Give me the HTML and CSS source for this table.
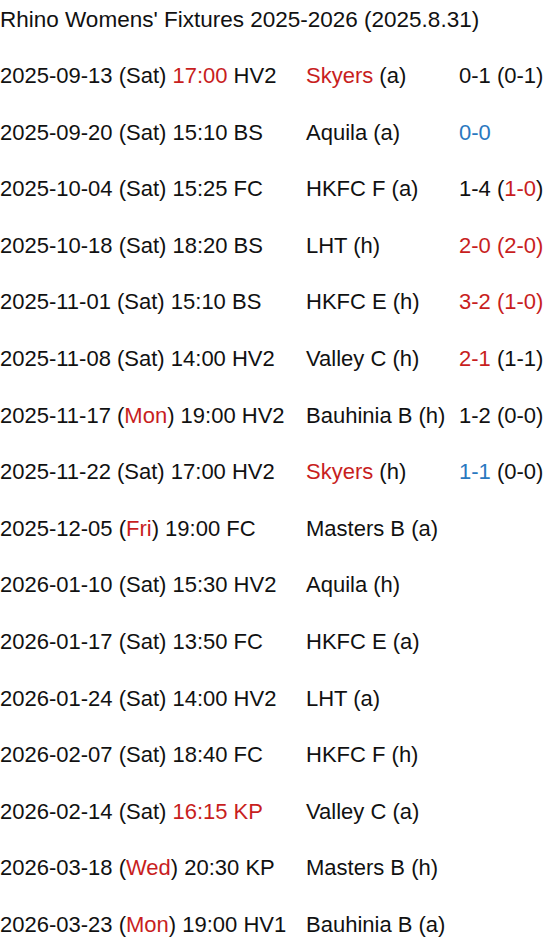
FILE: index.html
```html
<!DOCTYPE html>
<html lang="en">
<head>
<meta charset="utf-8">
<title>Rhino Womens' Fixtures 2025-2026</title>
<link rel="stylesheet" href="styles.css">
</head>
<body>
<div class="page">
  <div class="title">Rhino Womens' Fixtures 2025-2026 (2025.8.31)</div>
  <div class="fixtures">
    <div class="c1">2025-09-13 (Sat) <span class="red">17:00</span> HV2</div><div class="c2"><span class="red">Skyers</span> (a)</div><div class="c3">0-1 (0-1)</div>
    <div class="c1">2025-09-20 (Sat) 15:10 BS</div><div class="c2">Aquila (a)</div><div class="c3"><span class="blue">0-0</span></div>
    <div class="c1">2025-10-04 (Sat) 15:25 FC</div><div class="c2">HKFC F (a)</div><div class="c3">1-4 (<span class="red">1-0</span>)</div>
    <div class="c1">2025-10-18 (Sat) 18:20 BS</div><div class="c2">LHT (h)</div><div class="c3"><span class="red">2-0 (2-0)</span></div>
    <div class="c1">2025-11-01 (Sat) 15:10 BS</div><div class="c2">HKFC E (h)</div><div class="c3"><span class="red">3-2 (1-0)</span></div>
    <div class="c1">2025-11-08 (Sat) 14:00 HV2</div><div class="c2">Valley C (h)</div><div class="c3"><span class="red">2-1</span> (1-1)</div>
    <div class="c1">2025-11-17 (<span class="red">Mon</span>) 19:00 HV2</div><div class="c2">Bauhinia B (h)</div><div class="c3">1-2 (0-0)</div>
    <div class="c1">2025-11-22 (Sat) 17:00 HV2</div><div class="c2"><span class="red">Skyers</span> (h)</div><div class="c3"><span class="blue">1-1</span> (0-0)</div>
    <div class="c1">2025-12-05 (<span class="red">Fri</span>) 19:00 FC</div><div class="c2">Masters B (a)</div><div class="c3"></div>
    <div class="c1">2026-01-10 (Sat) 15:30 HV2</div><div class="c2">Aquila (h)</div><div class="c3"></div>
    <div class="c1">2026-01-17 (Sat) 13:50 FC</div><div class="c2">HKFC E (a)</div><div class="c3"></div>
    <div class="c1">2026-01-24 (Sat) 14:00 HV2</div><div class="c2">LHT (a)</div><div class="c3"></div>
    <div class="c1">2026-02-07 (Sat) 18:40 FC</div><div class="c2">HKFC F (h)</div><div class="c3"></div>
    <div class="c1">2026-02-14 (Sat) <span class="red">16:15 KP</span></div><div class="c2">Valley C (a)</div><div class="c3"></div>
    <div class="c1">2026-03-18 (<span class="red">Wed</span>) 20:30 KP</div><div class="c2">Masters B (h)</div><div class="c3"></div>
    <div class="c1">2026-03-23 (<span class="red">Mon</span>) 19:00 HV1</div><div class="c2">Bauhinia B (a)</div><div class="c3"></div>
  </div>
</div>
</body>
</html>
```

FILE: styles.css
```css
html, body {
  margin: 0;
  padding: 0;
  background: #ffffff;
}

body {
  font-family: "Liberation Sans", Arial, sans-serif;
  font-size: 22px;
  color: #111111;
  white-space: nowrap;
  overflow: hidden;
}

.page {
  width: 544px;
}

.title {
  font-size: 22.5px;
  line-height: 39.2px;
  height: 48.1px;
}

.fixtures {
  display: grid;
  grid-template-columns: 306px 153px auto;
  grid-auto-rows: 56.6px;
  line-height: 56.6px;
}

.c1, .c2, .c3 {
  overflow: visible;
}

.red {
  color: #c81e1e;
}

.blue {
  color: #2a78bf;
}
```
